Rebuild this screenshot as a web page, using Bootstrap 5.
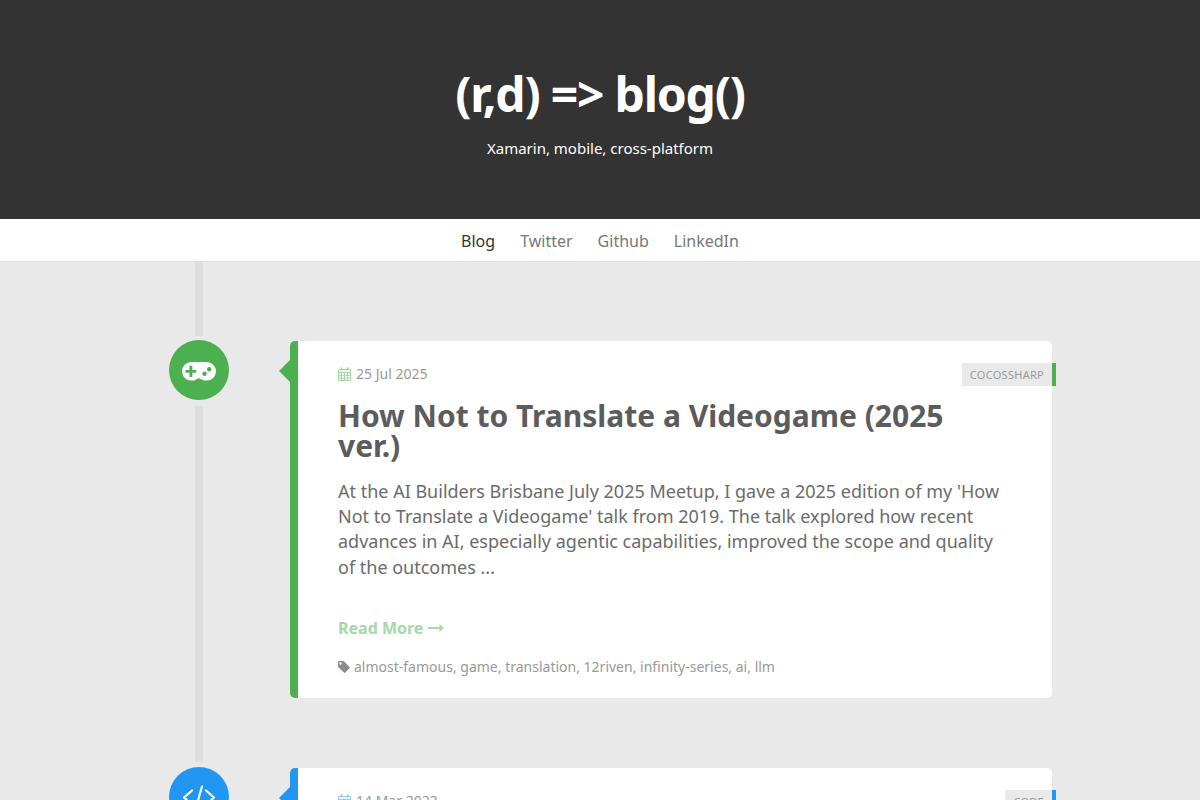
<!DOCTYPE html>
<html lang="en">
<head>
<meta charset="utf-8">
<meta name="viewport" content="width=device-width, initial-scale=1">
<title>(r,d) =&gt; blog()</title>
<link rel="stylesheet" href="https://cdn.jsdelivr.net/npm/bootstrap@5.3.0/dist/css/bootstrap.min.css">
<style>
  body { font-family: "Noto Sans", sans-serif; background: #e9e9e9; color: #666; }
  a { text-decoration: none; color: inherit; }
  .masthead { background: #333; padding: 70px 16px 59px; }
  .masthead h1 { font-size: 48px; line-height: 48px; letter-spacing: -.025em; margin-bottom: 19px; }
  .masthead p { font-size: 15px; line-height: 23px; }
  .site-nav { min-height: 43px; border-bottom: 1px solid #e0e0e0; }
  .site-nav ul { gap: 25px; }
  .site-nav .nav-link { color: #777; font-size: 16px; line-height: 24px; padding: 10px 0 8px; }
  .site-nav .nav-link.active { color: #333; }
  .timeline { max-width: 904px; }
  .rail { width: 102px; flex: none; }
  .spine { width: 8px; background: #dedede; }
  .spine-start { height: 74px; margin: 0 47px 4px; }
  .marker { width: 60px; height: 60px; background: var(--accent); margin-bottom: 6px; flex: none; }
  .rail .spine { margin-bottom: 5px; }
  .entry-green { --accent: #4caf50; --accent-soft: #a5d7a7; }
  .entry-blue { --accent: #2196f3; --accent-soft: #90caf9; }
  .entry { gap: 40px; }
  .post { border: 0; border-left: 8px solid var(--accent); border-radius: 5px; margin: 1px 0 69px; padding: 22px 40px 20px; min-width: 0; color: #6b6b6b; }
  .post::before { content: ""; position: absolute; left: -19px; top: 19px; border: 11px solid transparent; border-left: 0; border-right-color: var(--accent); }
  .post-date { font-size: 14px; line-height: 22px; color: #999; gap: 5px; }
  .post-date svg, .more { color: var(--accent-soft); }
  .category { position: absolute; top: 22px; right: -4px; border-right: 4px solid var(--accent); background: #e9e9e9; color: #999; font-size: 11px; line-height: 23px; letter-spacing: .025em; padding: 0 8px; text-transform: uppercase; }
  .post h2 { font-size: 30px; line-height: 30px; color: #5c5c5c; margin: 16px 0 18px; }
  .excerpt { font-size: 18px; line-height: 1.4; margin-bottom: 35px; }
  .more { font-size: 16px; line-height: 26px; gap: 5px; }
  .tags { font-size: 14px; line-height: 22px; color: #999; gap: 4px; margin-top: 15px; }
  .tags svg { color: #8c8c8c; }
</style>
</head>
<body>
<header class="masthead text-center text-white">
  <h1 class="fw-bold">(r,d) =&gt; blog()</h1>
  <p class="mb-0">Xamarin, mobile, cross-platform</p>
</header>
<nav class="site-nav bg-white" aria-label="Main">
  <ul class="nav justify-content-center">
    <li class="nav-item"><a class="nav-link active" aria-current="page" href="#">Blog</a></li>
    <li class="nav-item"><a class="nav-link" href="#">Twitter</a></li>
    <li class="nav-item"><a class="nav-link" href="#">Github</a></li>
    <li class="nav-item"><a class="nav-link" href="#">LinkedIn</a></li>
  </ul>
</nav>

<main class="timeline mx-auto">
  <div class="spine spine-start"></div>

  <article class="entry entry-green d-flex">
    <div class="rail d-flex flex-column align-items-center">
      <div class="marker rounded-circle d-flex align-items-center justify-content-center">
        <svg width="34" height="20" viewBox="0 0 34 20" overflow="visible" aria-hidden="true">
          <path fill="#fff" d="M9.300 2h15.400a9.300 9.300 0 0 1 0 18.600c-2.500 0-4.200-.6-5.700-1.700-1.200-.5-2.800-.5-4 0-1.500 1.100-3.200 1.700-5.700 1.700A9.300 9.300 0 0 1 9.300 2z"/>
          <path fill="#4caf50" d="M7.500 5.800h2.800v4.200h4v2.800h-4v4.200H7.500v-4.200h-4V10h4z"/>
          <circle cx="22.500" cy="13.700" r="2.200" fill="#4caf50"/><circle cx="27.200" cy="9.200" r="2.200" fill="#4caf50"/>
        </svg>
      </div>
      <div class="spine flex-grow-1"></div>
    </div>
    <div class="post card flex-grow-1">
      <div class="post-date d-flex align-items-center">
        <svg width="13" height="14" viewBox="0 0 13 14" fill="none" stroke="currentColor" aria-hidden="true">
          <path d="M.5 2.500h12v11H.5zM.5 5.500h12M.5 8.300h12M.5 11h12M3.500 5v8.500M6.500 5v8.500M9.500 5v8.500"/>
          <path stroke-width="2" d="M3.500.5v3M9.500.5v3"/>
        </svg>
        <time datetime="2025-07-25">25 Jul 2025</time>
      </div>
      <a class="category" href="#">CocosSharp</a>
      <h2 class="fw-bold"><a href="#">How Not to Translate a Videogame (2025 ver.)</a></h2>
      <p class="excerpt">At the AI Builders Brisbane July 2025 Meetup, I gave a 2025 edition of my 'How Not to Translate a Videogame' talk from 2019. The talk explored how recent advances in AI, especially agentic capabilities, improved the scope and quality of the outcomes ...</p>
      <a class="more fw-bold d-flex align-items-center" href="#">Read More
        <svg width="16" height="10" viewBox="0 0 16 10" fill="currentColor" aria-hidden="true"><path d="M0 4h11.500V1L16 5l-4.500 4V6H0z"/></svg>
      </a>
      <div class="tags d-flex align-items-center">
        <svg width="12" height="12" viewBox="0 0 12 12" fill="currentColor" aria-hidden="true"><path fill-rule="evenodd" d="M1 0h4q.7 0 1.200.5l5.400 5.400q.7.700 0 1.400l-4.300 4.300q-.7.700-1.400 0L.5 6.200Q0 5.700 0 5V1q0-1 1-1zm1.500 1.300a1.200 1.200 0 1 0 0 2.400 1.200 1.200 0 0 0 0-2.400z"/></svg>
        <div><a href="#">almost-famous</a>, <a href="#">game</a>, <a href="#">translation</a>, <a href="#">12riven</a>, <a href="#">infinity-series</a>, <a href="#">ai</a>, <a href="#">llm</a></div>
      </div>
    </div>
  </article>

  <article class="entry entry-blue d-flex">
    <div class="rail d-flex flex-column align-items-center">
      <div class="marker rounded-circle d-flex align-items-center justify-content-center">
        <svg width="34" height="24" viewBox="0 0 34 24" fill="none" stroke="#fff" stroke-width="2.200" stroke-linecap="round" stroke-linejoin="round" aria-hidden="true">
          <path d="M10 5.500L2 12.500l8 7M24 5.500l8 7-8 7M20 1.500l-6 21"/>
        </svg>
      </div>
      <div class="spine flex-grow-1"></div>
    </div>
    <div class="post card flex-grow-1">
      <div class="post-date d-flex align-items-center">
        <svg width="13" height="14" viewBox="0 0 13 14" fill="none" stroke="currentColor" aria-hidden="true">
          <path d="M.5 2.500h12v11H.5zM.5 5.500h12M.5 8.300h12M.5 11h12M3.500 5v8.500M6.500 5v8.500M9.500 5v8.500"/>
          <path stroke-width="2" d="M3.500.5v3M9.500.5v3"/>
        </svg>
        <time datetime="2023-03-14">14 Mar 2023</time>
      </div>
      <a class="category" href="#">Code</a>
    </div>
  </article>
</main>
<script src="https://cdn.jsdelivr.net/npm/bootstrap@5.3.0/dist/js/bootstrap.bundle.min.js"></script>
</body>
</html>
